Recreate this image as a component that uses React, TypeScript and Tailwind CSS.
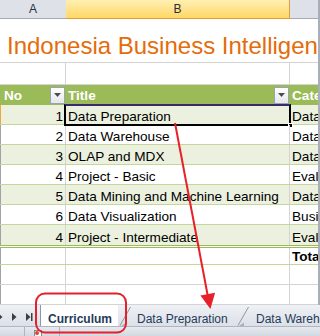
import React from "react";

type Row = { n: number; t: string; c: string; band: boolean; sel?: boolean };

const rows: Row[] = [
  { n: 1, t: "Data Preparation", c: "Data Management", band: true, sel: true },
  { n: 2, t: "Data Warehouse", c: "Data Management", band: false },
  { n: 3, t: "OLAP and MDX", c: "Data Analysis", band: true },
  { n: 4, t: "Project - Basic", c: "Evaluation", band: false },
  { n: 5, t: "Data Mining and Machine Learning", c: "Data Analysis", band: true },
  { n: 6, t: "Data Visualization", c: "Business", band: false },
  { n: 4, t: "Project - Intermediate", c: "Evaluation", band: true },
];

function DropBtn() {
  return (
    <div className="w-[15px] h-[17px] border border-[#9AA3AD] bg-gradient-to-b from-[#FFFFFF] to-[#E4E7EB] flex items-start justify-center pt-[5px]">
      <svg width="7" height="4" viewBox="0 0 7 4">
        <polygon points="0,0 7,0 3.5,4" fill="#4A4F55" />
      </svg>
    </div>
  );
}

function Slash() {
  return (
    <svg width="14" height="21" viewBox="0 0 14 21" className="shrink-0">
      <line x1="12.5" y1="2" x2="2" y2="20.5" stroke="#8E97A3" strokeWidth="1" />
      <polygon points="3,21 8,21 8,17.5" fill="#A9B1BC" />
    </svg>
  );
}

export default function App() {
  return (
    <div className="relative w-[320px] h-[336px] overflow-hidden bg-white font-['Liberation_Sans',Arial,sans-serif] text-black">
      <div className="flex h-[305px]">
        <div className="w-[318px] flex flex-col">
          {/* column headers */}
          <div className="flex h-[19px] text-[12px] leading-none text-[#26303B]">
            <div className="w-[66px] bg-[#DEE2E8] border-b border-[#A5ACB5] flex items-center justify-center">A</div>
            <div className="w-[224px] bg-gradient-to-b from-[#FFEFB2] to-[#FFD762] border-b border-r border-[#DE9F3A] flex items-center justify-center">B</div>
            <div className="w-[28px] bg-[#DEE2E8] border-b border-[#A5ACB5]"></div>
          </div>
          {/* title row */}
          <div className="h-[44px] border-b border-[#D4D4D4] flex items-end pl-[7px] pb-[3px] overflow-hidden whitespace-nowrap">
            <span className="text-[24px] leading-[27px] text-[#E46C0A]">Indonesia Business Intelligence Curriculum</span>
          </div>
          {/* empty row */}
          <div className="flex h-[22px] border-b border-[#D4D4D4]">
            <div className="w-[66px] border-r border-[#D4D4D4]"></div>
            <div className="w-[224px] border-r border-[#D4D4D4]"></div>
            <div className="w-[28px]"></div>
          </div>
          {/* table header */}
          <div className="flex h-[20px] bg-[#9BBB59] text-white font-bold text-[13.6px] leading-[16px]">
            <div className="w-[66px] flex items-center justify-between pl-[4px] pr-[1px]">
              <span className="pt-[2px]">No</span>
              <DropBtn />
            </div>
            <div className="w-[224px] flex items-center justify-between pl-[2px] pr-[1px]">
              <span className="pt-[2px]">Title</span>
              <DropBtn />
            </div>
            <div className="w-[28px] flex items-center pl-[2px] overflow-hidden whitespace-nowrap">
              <span className="pt-[2px]">Category</span>
            </div>
          </div>
          {/* data rows */}
          {rows.map((r, i) => (
            <div
              key={i}
              className={`flex h-[20px] ${i < rows.length - 1 ? "border-b border-[#C4D79B]" : ""} ${r.band ? "bg-[#EBF1DE]" : "bg-white"} text-[13.6px] leading-[15px] items-stretch`}
            >
              <div className={`w-[66px] border-l ${r.sel ? "border-l-[#F2A640]" : "border-l-[#9CA3AB]"} border-r border-r-[#D4D4D4] flex items-end justify-end pr-[2px]`}>
                {r.n}
              </div>
              <div className="relative w-[224px] border-r border-[#D4D4D4] flex items-end pl-[2px] whitespace-nowrap">
                {r.t}
                {r.sel && (
                  <>
                    <div className="absolute left-[-2px] top-[-1px] right-[-2px] bottom-[-2px] border-2 border-black border-t-[#3A2A6A]"></div>
                    <div className="absolute right-[-4px] bottom-[-4px] w-[5px] h-[5px] bg-black border border-white"></div>
                  </>
                )}
              </div>
              <div className="w-[28px] flex items-end pl-[2px] overflow-hidden whitespace-nowrap">{r.c}</div>
            </div>
          ))}
          {/* total row */}
          <div className="flex h-[20px] border-t-[3px] border-double border-t-[#9BBB59] border-b border-b-[#C4D79B] text-[13.6px] leading-[15px]">
            <div className="w-[66px] border-l border-l-[#9CA3AB] border-r border-r-[#D4D4D4]"></div>
            <div className="w-[224px] border-r border-[#D4D4D4]"></div>
            <div className="w-[28px] flex items-end pl-[2px] overflow-hidden whitespace-nowrap font-bold">Total</div>
          </div>
          {/* empty rows */}
          {[0, 1].map((k) => (
            <div key={k} className="flex h-[20px] border-b border-[#D4D4D4]">
              <div className="w-[66px] border-l border-l-[#9CA3AB] border-r border-r-[#D4D4D4]"></div>
              <div className="w-[224px] border-r border-[#D4D4D4]"></div>
              <div className="w-[28px]"></div>
            </div>
          ))}
        </div>
        <div className="w-[2px] bg-[#A9AFB8]"></div>
      </div>

      {/* sheet tabs */}
      <div className="flex h-[21px] bg-gradient-to-b from-[#EEF1F5] to-[#DCE1E8] text-[12px] leading-[14px] text-[#253A59]">
        <svg width="40" height="21" viewBox="0 0 40 21" className="shrink-0">
          <polygon points="-2,8 2.5,12 -2,16" fill="#3A3F45" />
          <polygon points="12,8 16.5,12 12,16" fill="#3A3F45" />
          <polygon points="26,8 30.5,12 26,16" fill="#3A3F45" />
          <rect x="31" y="8" width="1.5" height="8" fill="#3A3F45" />
        </svg>
        <div className="w-[78px] bg-white border-l border-[#8E97A3] flex items-end pl-[7px] font-bold">
          Curriculum
        </div>
        <Slash />
        <div className="w-[104px] flex items-end pl-[5px] whitespace-nowrap">Data Preparation</div>
        <Slash />
        <div className="flex-1 flex items-end pl-[6px] whitespace-nowrap overflow-hidden">Data Warehouse</div>
      </div>

      {/* status strip */}
      <div className="relative flex h-[10px] border-t border-[#AEB6C1] bg-gradient-to-b from-[#E6EAEF] to-[#D3D9E0]">
        <div className="w-[25px] border-r border-[#AEB6C1]"></div>
        <div className="w-[35px] border-r border-[#AEB6C1] flex items-end pl-[9px]">
          <svg width="9" height="7" viewBox="0 0 9 7">
            <rect x="0.5" y="1.5" width="7" height="6" fill="#F4F6F8" stroke="#7C8CA3" />
            <circle cx="3" cy="4" r="2" fill="#E2452F" />
          </svg>
        </div>
      </div>

      {/* annotations */}
      <svg className="absolute inset-0 pointer-events-none" width="320" height="336" viewBox="0 0 320 336">
        <line x1="175" y1="123" x2="208" y2="297" stroke="#E8202A" strokeWidth="2" />
        <polygon points="210.4,309 200.4,295.6 215.1,292.8" fill="#E8202A" />
        <rect x="36" y="293.5" width="90" height="39" rx="9" fill="none" stroke="#E3202C" strokeWidth="2" />
      </svg>
    </div>
  );
}
